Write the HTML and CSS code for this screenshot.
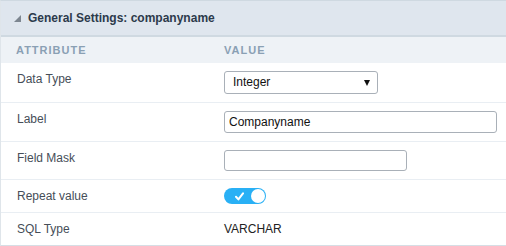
FILE: index.html
```html
<!DOCTYPE html>
<html lang="en">
<head>
    <meta charset="UTF-8">
    <title>General Settings</title>
    <link rel="stylesheet" href="styles.css">
</head>
<body>

    <div class="settings-panel">
        <div class="panel-header">
            <span class="collapse-icon"></span>
            <h2>General Settings: companyname</h2>
        </div>

        <table class="settings-table">
            <thead>
                <tr>
                    <th class="col-attr">Attribute</th>
                    <th>Value</th>
                </tr>
            </thead>
            <tbody>
                <tr>
                    <td class="col-attr">Data Type</td>
                    <td>
                        <div class="fake-select">
                            <span>Integer</span>
                            <span class="select-arrow"></span>
                        </div>
                    </td>
                </tr>
                <tr>
                    <td class="col-attr">Label</td>
                    <td><input type="text" class="text-input wide" value="Companyname"></td>
                </tr>
                <tr>
                    <td class="col-attr">Field Mask</td>
                    <td><input type="text" class="text-input mask" value=""></td>
                </tr>
                <tr>
                    <td class="col-attr">Repeat value</td>
                    <td>
                        <span class="toggle">
                            <svg class="toggle-check" width="9" height="9" viewBox="0 0 9 9">
                                <path d="M1 4.8 L3.4 7.4 L8 1.4" fill="none" stroke="#fff" stroke-width="2" stroke-linecap="round" stroke-linejoin="round"/>
                            </svg>
                            <span class="toggle-knob"></span>
                        </span>
                    </td>
                </tr>
                <tr>
                    <td class="col-attr">SQL Type</td>
                    <td class="plain-value">VARCHAR</td>
                </tr>
            </tbody>
        </table>
    </div>

</body>
</html>
```

FILE: styles.css
```css
/* --- General Setup --- */
:root {
    --header-bg: #dfe6ee;
    --subheader-bg: #eef2f6;
    --border-color: #cfd9e1;
    --row-line: #e9eef3;
    --text-color: #464e58;
    --toggle-blue: #29b0f5;
}

body {
    margin: 0;
    font-family: 'Liberation Sans', Arial, sans-serif;
    background: #ffffff;
}

/* --- Panel --- */
.settings-panel {
    border-top: 1px solid var(--border-color);
    border-left: 1px solid #dfe5ea;
    border-bottom: 2px solid #d6dee5;
}

.panel-header {
    display: flex;
    align-items: center;
    height: 34px;
    padding-left: 13px;
    background-color: var(--header-bg);
    border-bottom: 2px solid var(--border-color);
}

.collapse-icon {
    width: 0;
    height: 0;
    border-left: 7px solid transparent;
    border-bottom: 7px solid #7d8690;
    margin-right: 7px;
    margin-top: 1px;
}

h2 {
    margin: 0;
    font-size: 12px;
    font-weight: bold;
    color: #2c3a4b;
}

/* --- Table --- */
.settings-table {
    width: 100%;
    border-collapse: collapse;
    font-size: 12px;
    color: var(--text-color);
}

.settings-table th {
    height: 26px;
    padding: 0 0 0 7px;
    background-color: var(--subheader-bg);
    text-align: left;
    font-size: 11px;
    font-weight: 600;
    letter-spacing: 1px;
    text-transform: uppercase;
    color: #8aa0b4;
}

.settings-table th.col-attr {
    padding-left: 15px;
}

.settings-table td {
    padding: 8px 0 8px 7px;
    line-height: 15px;
    vertical-align: top;
    border-bottom: 1px solid var(--row-line);
}

.settings-table tbody tr:last-child td {
    border-bottom: none;
}

.settings-table td.col-attr {
    width: 200px;
    padding-left: 16px;
    padding-top: 9px;
}

.settings-table td.plain-value {
    padding-top: 9px;
    color: #222;
}

/* --- Form Elements --- */
.fake-select {
    display: flex;
    justify-content: space-between;
    align-items: center;
    box-sizing: border-box;
    width: 154px;
    height: 23px;
    padding: 0 7px 0 8px;
    border: 1px solid #a9b0b8;
    border-radius: 3px;
    color: #111;
}

.select-arrow {
    width: 0;
    height: 0;
    border-left: 3px solid transparent;
    border-right: 3px solid transparent;
    border-top: 6px solid #111;
    margin-top: 1px;
}

.text-input {
    display: block;
    box-sizing: border-box;
    height: 22px;
    padding: 0 4px;
    border: 1px solid #a9b0b8;
    border-radius: 3px;
    font-family: 'Liberation Sans', Arial, sans-serif;
    font-size: 12px;
    color: #111;
}

.text-input.wide {
    width: 273px;
}

.text-input.mask {
    width: 183px;
    height: 21px;
}

/* --- Toggle --- */
.toggle {
    display: flex;
    align-items: center;
    justify-content: space-between;
    box-sizing: border-box;
    width: 42px;
    height: 16px;
    padding: 0 1px 0 11px;
    border-radius: 8px;
    background-color: var(--toggle-blue);
}

.toggle-check {
    display: block;
}

.toggle-knob {
    width: 14px;
    height: 14px;
    border-radius: 50%;
    background: #ffffff;
}
```
